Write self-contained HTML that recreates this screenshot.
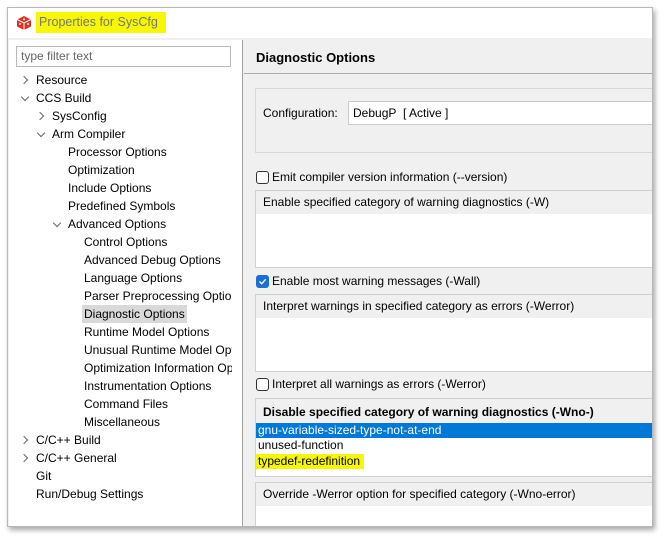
<!DOCTYPE html>
<html><head><style>
*{margin:0;padding:0;box-sizing:border-box}
body{width:667px;height:537px;background:#fff;font-family:"Liberation Sans",sans-serif;font-size:12px;color:#000;position:relative;overflow:hidden}
.win{position:absolute;left:7px;top:7px;width:646px;height:520px;background:#f0f0f0;border:1px solid #b8b8b8;box-shadow:2px 3px 5px rgba(0,0,0,.35);overflow:hidden}
.title{position:absolute;left:0;top:0;width:100%;height:30px;background:#fff}
.ttl{position:absolute;left:28px;top:4px;height:21px;background:#f7f700;color:#777;font-size:12.5px;padding:0 8px 0 3px;line-height:21px}
.left{position:absolute;left:1px;top:32px;width:233px;height:490px;background:#fff}
.filter{position:absolute;left:7px;top:6px;width:215px;height:21px;border:1px solid #bbb;color:#666;padding:2px 4px;font-size:12px}
.t{position:absolute;white-space:nowrap;height:18px;line-height:18px}
.sel{background:#d9d9d9;padding:0 2px;margin-left:-2px}
.ch{position:absolute;width:6px;height:6px;border-right:1.2px solid #666;border-bottom:1.2px solid #666}
.sep{position:absolute;left:234px;top:32px;width:1px;height:490px;background:#a0a0a0}
.hdr{position:absolute;left:248px;top:42px;font-weight:bold;font-size:13px}
.hl{position:absolute;left:236px;top:65px;width:420px;height:1px;background:#aaa}
.box{position:absolute;left:247px;width:410px;border:1px solid #d0d0d0;background:#fff}
.box .h{background:#f0f0f0;height:23px;line-height:23px;padding-left:7px}
.cb{position:absolute;width:13px;height:13px;border:1px solid #333;border-radius:3px;background:#fff}
.lbl{position:absolute;white-space:nowrap}
</style></head><body>
<div class="win">
 <div class="title">
  <svg style="position:absolute;left:8px;top:7px" width="16" height="16" viewBox="0 0 16 16"><path d="M8 1L15 4.5V11.5L8 15L1 11.5V4.5Z" fill="#d32"/><path d="M1 4.5L8 8L15 4.5M8 8V15" stroke="#fff" stroke-width="1" fill="none"/><circle cx="8" cy="4.3" r="1" fill="#fff"/><circle cx="4" cy="9" r="1" fill="#fff"/><circle cx="12" cy="9" r="1" fill="#fff"/></svg>
  <div class="ttl">Properties for SysCfg</div>
 </div>
 <div class="left">
  <div class="filter">type filter text</div>
 </div>
 <div class="sep"></div>
 <div class="hdr">Diagnostic Options</div>
 <div class="hl"></div>
 <div style="position:absolute;left:247px;top:80px;width:410px;height:65px;border:1px solid #d8d8d8"></div>
 <div class="lbl" style="left:255px;top:98px">Configuration:</div>
 <div style="position:absolute;left:340px;top:93px;width:320px;height:24px;background:#fff;border:1px solid #ccc;padding:4px 4px">DebugP&nbsp; [ Active ]</div>
 <div class="cb" style="left:248px;top:163px"></div><div class="lbl" style="left:264px;top:162px">Emit compiler version information (--version)</div>
 <div class="box" style="top:182px;height:78px"><div class="h">Enable specified category of warning diagnostics (-W)</div></div>
 <div class="cb" style="left:248px;top:267px;background:#1a6fd0;border-color:#1a6fd0"><svg width="11" height="11" style="position:absolute;left:0;top:0"><path d="M2.5 5.5L4.7 7.7L8.7 3.3" stroke="#fff" stroke-width="1.4" fill="none"/></svg></div><div class="lbl" style="left:264px;top:266px">Enable most warning messages (-Wall)</div>
 <div class="box" style="top:286px;height:78px"><div class="h">Interpret warnings in specified category as errors (-Werror)</div></div>
 <div class="cb" style="left:248px;top:370px"></div><div class="lbl" style="left:264px;top:369px">Interpret all warnings as errors (-Werror)</div>
 <div class="box" style="top:390px;height:79px"><div class="h" style="font-weight:bold;height:24px;line-height:26px">Disable specified category of warning diagnostics (-Wno-)</div>
  <div style="background:#0078d7;color:#fff;height:15px;line-height:15px;padding-left:2px">gnu-variable-sized-type-not-at-end</div>
  <div style="height:15px;line-height:15px;padding-left:2px">unused-function</div>
  <div style="height:16px;line-height:16px"><span style="background:#f7f700;padding:0 4px 1px 2px">typedef-redefinition</span></div>
 </div>
 <div class="box" style="top:474px;height:60px"><div class="h">Override -Werror option for specified category (-Wno-error)</div></div>
</div>
<div class="t" style="left:36px;top:71px">Resource</div>
<div class="t" style="left:36px;top:89px">CCS Build</div>
<div class="t" style="left:52px;top:107px">SysConfig</div>
<div class="t" style="left:52px;top:125px">Arm Compiler</div>
<div class="t" style="left:68px;top:143px">Processor Options</div>
<div class="t" style="left:68px;top:161px">Optimization</div>
<div class="t" style="left:68px;top:179px">Include Options</div>
<div class="t" style="left:68px;top:197px">Predefined Symbols</div>
<div class="t" style="left:68px;top:215px">Advanced Options</div>
<div class="t" style="left:84px;top:233px">Control Options</div>
<div class="t" style="left:84px;top:251px">Advanced Debug Options</div>
<div class="t" style="left:84px;top:269px">Language Options</div>
<div class="t" style="left:84px;top:287px;width:148px;overflow:hidden">Parser Preprocessing Options</div>
<div class="t sel" style="left:84px;top:305px">Diagnostic Options</div>
<div class="t" style="left:84px;top:323px">Runtime Model Options</div>
<div class="t" style="left:84px;top:341px;width:148px;overflow:hidden">Unusual Runtime Model Options</div>
<div class="t" style="left:84px;top:359px;width:148px;overflow:hidden">Optimization Information Options</div>
<div class="t" style="left:84px;top:377px">Instrumentation Options</div>
<div class="t" style="left:84px;top:395px">Command Files</div>
<div class="t" style="left:84px;top:413px">Miscellaneous</div>
<div class="t" style="left:36px;top:431px">C/C++ Build</div>
<div class="t" style="left:36px;top:449px">C/C++ General</div>
<div class="t" style="left:36px;top:467px">Git</div>
<div class="t" style="left:36px;top:485px">Run/Debug Settings</div>
<div class="ch" style="left:21px;top:77px;transform:rotate(-45deg)"></div>
<div class="ch" style="left:22px;top:94px;transform:rotate(45deg)"></div>
<div class="ch" style="left:37px;top:113px;transform:rotate(-45deg)"></div>
<div class="ch" style="left:38px;top:130px;transform:rotate(45deg)"></div>
<div class="ch" style="left:54px;top:220px;transform:rotate(45deg)"></div>
<div class="ch" style="left:21px;top:437px;transform:rotate(-45deg)"></div>
<div class="ch" style="left:21px;top:455px;transform:rotate(-45deg)"></div>
</body></html>
